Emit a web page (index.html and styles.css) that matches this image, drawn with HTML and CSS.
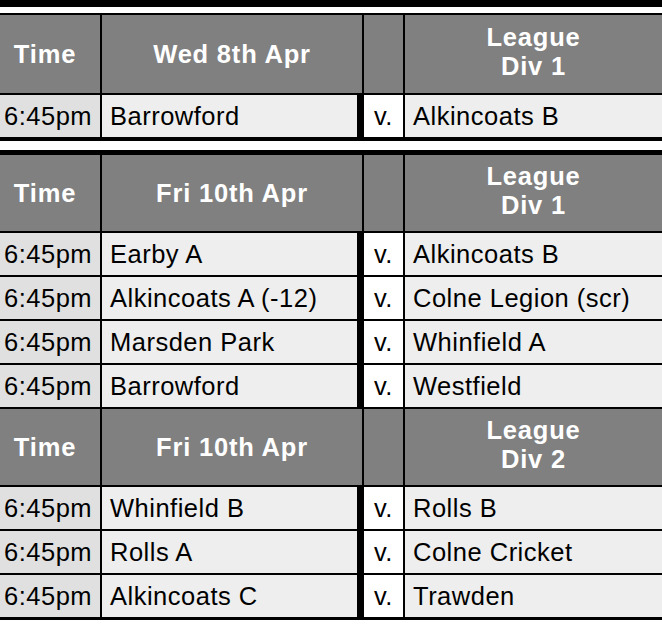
FILE: index.html
```html
<!DOCTYPE html>
<html>
<head>
<meta charset="utf-8">
<link rel="stylesheet" href="styles.css">
</head>
<body>
<div class="top-band"></div>
<div class="fixtures first">
  <div class="h time-h">Time</div>
  <div class="h">Wed 8th Apr</div>
  <div class="h"></div>
  <div class="h league">League<br>Div 1</div>

  <div class="c t">6:45pm</div><div class="c home">Barrowford</div><div class="c v">v.</div><div class="c away">Alkincoats B</div>
</div>

<div class="fixtures second">
  <div class="h time-h">Time</div>
  <div class="h">Fri 10th Apr</div>
  <div class="h"></div>
  <div class="h league">League<br>Div 1</div>

  <div class="c t">6:45pm</div><div class="c home">Earby A</div><div class="c v">v.</div><div class="c away">Alkincoats B</div>
  <div class="c t">6:45pm</div><div class="c home">Alkincoats A (-12)</div><div class="c v">v.</div><div class="c away">Colne Legion (scr)</div>
  <div class="c t">6:45pm</div><div class="c home">Marsden Park</div><div class="c v">v.</div><div class="c away">Whinfield A</div>
  <div class="c t">6:45pm</div><div class="c home">Barrowford</div><div class="c v">v.</div><div class="c away">Westfield</div>

  <div class="h time-h">Time</div>
  <div class="h">Fri 10th Apr</div>
  <div class="h"></div>
  <div class="h league">League<br>Div 2</div>

  <div class="c t">6:45pm</div><div class="c home">Whinfield B</div><div class="c v">v.</div><div class="c away">Rolls B</div>
  <div class="c t">6:45pm</div><div class="c home">Rolls A</div><div class="c v">v.</div><div class="c away">Colne Cricket</div>
  <div class="c t">6:45pm</div><div class="c home">Alkincoats C</div><div class="c v">v.</div><div class="c away">Trawden</div>
</div>
</body>
</html>
```
FILE: styles.css
```css
html, body {
  margin: 0;
  padding: 0;
  background: #ffffff;
}
body {
  width: 662px;
  font-family: "Liberation Sans", Arial, Helvetica, sans-serif;
  font-size: 25.5px;
  letter-spacing: 0.5px;
  color: #000;
}
.top-band {
  height: 7px;
  background: #000;
  margin-bottom: 6px;
}
.fixtures {
  display: grid;
  grid-template-columns: 100px 260px 39px 257px;
  column-gap: 2px;
  row-gap: 2px;
  background: #000;
  grid-auto-rows: 42px;
}
.first {
  padding: 2px 0 4px 0;
  grid-template-rows: 78px 42px;
}
.second {
  margin-top: 9px;
  padding: 5px 0 3px 0;
  grid-template-rows: 76px 42px 42px 42px 42px 76px 42px 42px 42px;
}
.h {
  background: #808080;
  color: #fff;
  font-weight: bold;
  letter-spacing: 0.8px;
  display: flex;
  align-items: center;
  justify-content: center;
  text-align: center;
  line-height: 29px;
}
.time-h {
  padding-right: 10px;
}
.league {
  padding-bottom: 4px;
}
.c {
  display: flex;
  align-items: center;
  white-space: nowrap;
  overflow: hidden;
}
.t {
  background: #e0e0e0;
  padding-left: 4px;
}
.home {
  background: #eeeeee;
  padding-left: 8px;
  box-sizing: border-box;
  border-right: 5px solid #000;
}
.v {
  background: #ffffff;
  justify-content: center;
}
.away {
  background: #eeeeee;
  padding-left: 8px;
}
```
